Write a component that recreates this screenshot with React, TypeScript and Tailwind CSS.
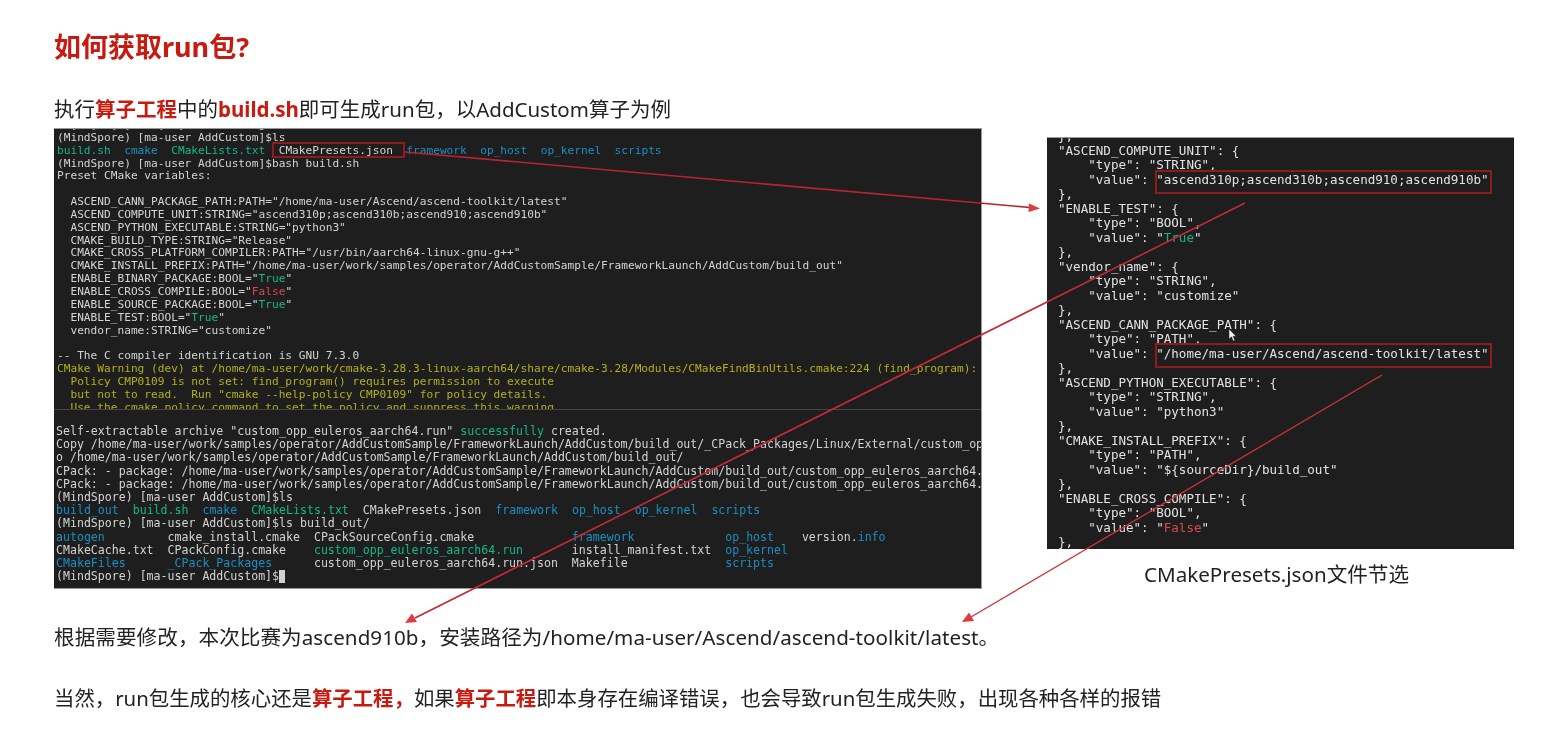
type Seg = [string, string?];
type Line = Seg[];

const G = "text-[#12b886]";
const B = "text-[#1b8fc4]";
const Y = "text-[#b3b01a]";
const R = "text-[#d9484c]";

// fullwidth comma, as in the slide text
const C = "\uFF0C";

const prompt = "(MindSpore) [ma-user AddCustom]$";

const upperLines: Line[] = [
  [["  [  ]  [ ]    [  ]           g   "]],
  [[prompt + "ls"]],
  [["build.sh", G], ["  "], ["cmake", B], ["  "], ["CMakeLists.txt", G], ["  CMakePresets.json  "], ["framework", B], ["  "], ["op_host", B], ["  "], ["op_kernel", B], ["  "], ["scripts", B]],
  [[prompt + "bash build.sh"]],
  [["Preset CMake variables:"]],
  [[" "]],
  [['  ASCEND_CANN_PACKAGE_PATH:PATH="/home/ma-user/Ascend/ascend-toolkit/latest"']],
  [['  ASCEND_COMPUTE_UNIT:STRING="ascend310p;ascend310b;ascend910;ascend910b"']],
  [['  ASCEND_PYTHON_EXECUTABLE:STRING="python3"']],
  [['  CMAKE_BUILD_TYPE:STRING="Release"']],
  [['  CMAKE_CROSS_PLATFORM_COMPILER:PATH="/usr/bin/aarch64-linux-gnu-g++"']],
  [['  CMAKE_INSTALL_PREFIX:PATH="/home/ma-user/work/samples/operator/AddCustomSample/FrameworkLaunch/AddCustom/build_out"']],
  [['  ENABLE_BINARY_PACKAGE:BOOL="'], ["True", G], ['"']],
  [['  ENABLE_CROSS_COMPILE:BOOL="'], ["False", R], ['"']],
  [['  ENABLE_SOURCE_PACKAGE:BOOL="'], ["True", G], ['"']],
  [['  ENABLE_TEST:BOOL="'], ["True", G], ['"']],
  [['  vendor_name:STRING="customize"']],
  [[" "]],
  [["-- The C compiler identification is GNU 7.3.0"]],
  [["CMake Warning (dev) at /home/ma-user/work/cmake-3.28.3-linux-aarch64/share/cmake-3.28/Modules/CMakeFindBinUtils.cmake:224 (find_program):", Y]],
  [["  Policy CMP0109 is not set: find_program() requires permission to execute", Y]],
  [['  but not to read.  Run "cmake --help-policy CMP0109" for policy details.', Y]],
  [["  Use the cmake policy command to set the policy and suppress this warning.", Y]],
];

const lowerLines: Line[] = [
  [['Self-extractable archive "custom_opp_euleros_aarch64.run" '], ["successfully", G], [" created."]],
  [["Copy /home/ma-user/work/samples/operator/AddCustomSample/FrameworkLaunch/AddCustom/build_out/_CPack_Packages/Linux/External/custom_opp_euleros"]],
  [["o /home/ma-user/work/samples/operator/AddCustomSample/FrameworkLaunch/AddCustom/build_out/"]],
  [["CPack: - package: /home/ma-user/work/samples/operator/AddCustomSample/FrameworkLaunch/AddCustom/build_out/custom_opp_euleros_aarch64.run"]],
  [["CPack: - package: /home/ma-user/work/samples/operator/AddCustomSample/FrameworkLaunch/AddCustom/build_out/custom_opp_euleros_aarch64.run"]],
  [[prompt + "ls"]],
  [["build_out", B], ["  "], ["build.sh", G], ["  "], ["cmake", B], ["  "], ["CMakeLists.txt", G], ["  CMakePresets.json  "], ["framework", B], ["  "], ["op_host", B], ["  "], ["op_kernel", B], ["  "], ["scripts", B]],
  [[prompt + "ls build_out/"]],
  [["autogen", B], ["         cmake_install.cmake  CPackSourceConfig.cmake              "], ["framework", B], ["             "], ["op_host", B], ["    version."], ["info", B]],
  [["CMakeCache.txt  CPackConfig.cmake    "], ["custom_opp_euleros_aarch64.run", G], ["       install_manifest.txt  "], ["op_kernel", B]],
  [["CMakeFiles", B], ["      "], ["_CPack_Packages", B], ["      custom_opp_euleros_aarch64.run.json  Makefile              "], ["scripts", B]],
];

const presetLines: Line[] = [
  [["},"]],
  [['"ASCEND_COMPUTE_UNIT": {']],
  [['    "type": "STRING",']],
  [['    "value": "ascend310p;ascend310b;ascend910;ascend910b"']],
  [["},"]],
  [['"ENABLE_TEST": {']],
  [['    "type": "BOOL",']],
  [['    "value": "'], ["True", G], ['"']],
  [["},"]],
  [['"vendor_name": {']],
  [['    "type": "STRING",']],
  [['    "value": "customize"']],
  [["},"]],
  [['"ASCEND_CANN_PACKAGE_PATH": {']],
  [['    "type": "PATH",']],
  [['    "value": "/home/ma-user/Ascend/ascend-toolkit/latest"']],
  [["},"]],
  [['"ASCEND_PYTHON_EXECUTABLE": {']],
  [['    "type": "STRING",']],
  [['    "value": "python3"']],
  [["},"]],
  [['"CMAKE_INSTALL_PREFIX": {']],
  [['    "type": "PATH",']],
  [['    "value": "${sourceDir}/build_out"']],
  [["},"]],
  [['"ENABLE_CROSS_COMPILE": {']],
  [['    "type": "BOOL",']],
  [['    "value": "'], ["False", R], ['"']],
  [["},"]],
];

const Lines = ({ lines }: { lines: Line[] }) => (
  <>
    {lines.map((line, i) => (
      <div key={i} className="whitespace-pre">
        {line.map(([text, color], j) => (
          <span key={j} className={color}>
            {text}
          </span>
        ))}
      </div>
    ))}
  </>
);

const Em = ({ children }: { children: string }) => (
  <span className="font-bold text-[#c81a10]">{children}</span>
);

const Arrows = () => (
  <svg className="absolute inset-0 pointer-events-none blur-[0.3px]" width="1556" height="750" fill="none">
    <line x1="405" y1="152" x2="1030" y2="207.5" stroke="#b9232f" strokeWidth="1.6" />
    <polygon points="1040,208.5 1029,203.5 1028.5,212" fill="#e0393f" />
    <line x1="1245" y1="203" x2="415" y2="618" stroke="#c22a35" strokeWidth="1.6" />
    <polygon points="405,623 412,613.5 417,622" fill="#e0393f" />
    <line x1="1382" y1="375" x2="971" y2="617" stroke="#d0323c" strokeWidth="1.3" />
    <polygon points="962,622 969,612.5 974,621" fill="#e0393f" />
  </svg>
);

export default function App() {
  return (
    <div className="relative w-full h-[750px] bg-white overflow-hidden pl-[54px] pt-[30px] text-[20.6px] leading-[28px] text-[#222] font-['Noto_Sans','Noto_Sans_CJK_SC',sans-serif]">
      <h1 className="text-[27px] leading-[34px] font-bold text-[#c81a10] blur-[0.3px]">如何获取run包?</h1>
      <p className="mt-[31px] text-[20.5px] blur-[0.3px]">
        执行<Em>算子工程</Em>中的<Em>build.sh</Em>即可生成run包{C}以AddCustom算子为例
      </p>

      <div className="mt-[5px] flex items-start">
        {/* terminal */}
        <div className="relative w-[928px] h-[461px] shrink-0 bg-[#1e1e1e] border-t border-r border-b border-[#999] overflow-hidden font-['DejaVu_Sans_Mono',monospace] text-[#d4d4d4]">
          <div className="h-[280px] overflow-hidden pl-[3px] text-[11.17px] leading-[12.85px] blur-[0.35px]">
            <div className="-mt-[10px]">
              <Lines lines={upperLines} />
            </div>
          </div>
          <div className="border-t border-[#464646] pt-[15px] pl-[2px] text-[11.58px] leading-[13.2px] blur-[0.35px]">
            <Lines lines={lowerLines} />
            <div className="flex items-center whitespace-pre">
              {prompt}
              <span className="w-[6px] h-[13px] bg-[#d0d0d0]" />
            </div>
          </div>
          <div className="absolute left-[218px] top-[13px] w-[133px] h-[16px] border-2 border-[#8f1c1c] rounded-[1px]" />
        </div>

        {/* json excerpt */}
        <div className="ml-[65px] mt-[9px] w-[467px] shrink-0">
          <div className="relative h-[412px] bg-[#1e1e1e] border-t border-[#999] overflow-hidden pl-[11px] font-['DejaVu_Sans_Mono',monospace] text-[#e2e2e2] text-[12.55px] leading-[14.5px]">
            <div className="-mt-[9px] blur-[0.35px]">
              <Lines lines={presetLines} />
            </div>
            <div className="absolute left-[108px] top-[32px] w-[337px] h-[24px] border-2 border-[#8f1c1c]" />
            <div className="absolute left-[108px] top-[205px] w-[337px] h-[25px] border-2 border-[#8f1c1c]" />
            <svg className="absolute left-[181px] top-[190px]" width="9" height="14" viewBox="0 0 9 14">
              <path d="M1 1 L1 11 L3.4 8.8 L5.2 13 L6.8 12.3 L5 8.3 L8 8.2 Z" fill="#f2f2f2" stroke="#222" strokeWidth="0.5" />
            </svg>
          </div>
          <p className="mt-[11px] pr-[8px] text-center blur-[0.3px]">CMakePresets.json文件节选</p>
        </div>
      </div>

      <p className="mt-[34px] tracking-[0.05px] blur-[0.3px]">
        根据需要修改{C}本次比赛为ascend910b{C}安装路径为/home/ma-user/Ascend/ascend-toolkit/latest。
      </p>
      <p className="mt-[33px] text-[20.4px] blur-[0.3px]">
        当然{C}run包生成的核心还是<Em>{"算子工程" + C}</Em>如果<Em>算子工程</Em>即本身存在编译错误{C}也会导致run包生成失败{C}出现各种各样的报错
      </p>

      <Arrows />
    </div>
  );
}
